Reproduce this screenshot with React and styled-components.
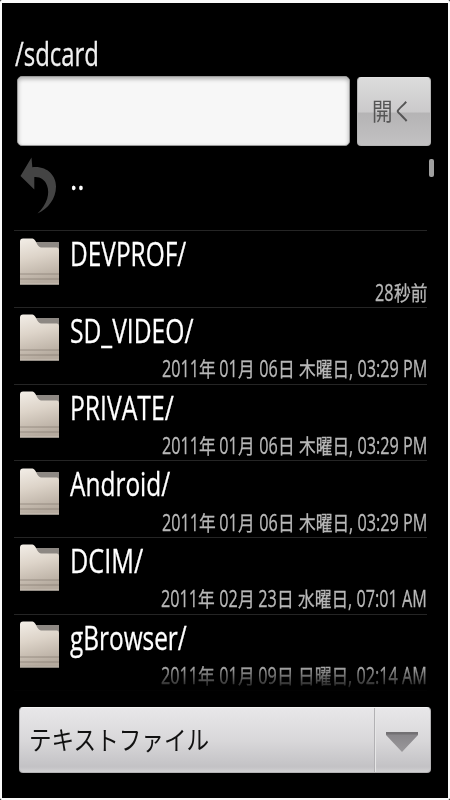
import React, { useLayoutEffect, useRef, useState } from "react"
import styled, { createGlobalStyle } from "styled-components"

const files = [
  {
    name: "DEVPROF/",
    width: 116,
    date: "28秒前",
  },
  {
    name: "SD_VIDEO/",
    width: 123.5,
    date: "2011年 01月 06日 木曜日, 03:29 PM",
  },
  {
    name: "PRIVATE/",
    width: 104,
    date: "2011年 01月 06日 木曜日, 03:29 PM",
  },
  {
    name: "Android/",
    width: 100,
    date: "2011年 01月 06日 木曜日, 03:29 PM",
  },
  {
    name: "DCIM/",
    width: 73,
    date: "2011年 02月 23日 水曜日, 07:01 AM",
  },
  {
    name: "gBrowser/",
    width: 116.5,
    date: "2011年 01月 09日 日曜日, 02:14 AM",
  },
]

// squeezes a run of text to a given width, or by a given factor
const Squeeze = ({ width, factor, children, ...rest }) => {
  const ref = useRef(null)
  const [natural, setNatural] = useState(0)

  useLayoutEffect(() => {
    setNatural(ref.current.offsetWidth)
  }, [children])

  const target = width || natural * factor
  const scale = natural ? target / natural : 1

  return (
    <Run style={{ width: target }} {...rest}>
      <RunText ref={ref} style={{ transform: `scaleX(${scale})` }}>
        {children}
      </RunText>
    </Run>
  )
}

const DateText = ({ children }) => (
  <DateLine>
    {children
      .split(/([\u3400-\u9fff]+)/)
      .filter(Boolean)
      .map((part, i) =>
        /[\u3400-\u9fff]/.test(part) ? (
          <KanjiRun key={i} factor={0.835}>
            {part}
          </KanjiRun>
        ) : (
          <Squeeze key={i} factor={0.675}>
            {part}
          </Squeeze>
        )
      )}
  </DateLine>
)

const BackIcon = () => (
  <svg width="40" height="60" viewBox="0 0 40 60">
    <path
      d="M.5 21 11.500 2.500l.8 9.700C26.500 10.500 36 20 36 31.500c0 12-8 22.500-18.500 27C27.500 49 30 38.500 27 30.500 25 24.500 20 21.500 14.300 22v12.500Z"
      fill="#444"
    />
  </svg>
)

const FolderIcon = () => (
  <svg width="40" height="47" viewBox="0 0 40 47">
    <defs>
      <linearGradient id="front" x1="0" y1="0" x2="0.2" y2="1">
        <stop offset="0" stopColor="#f3eee7" />
        <stop offset="0.45" stopColor="#ddd4c9" />
        <stop offset="1" stopColor="#b5aa9e" />
      </linearGradient>
    </defs>
    <path d="M15 4h24v12H20Z" fill="#8d8883" />
    <path
      d="M0 3.500Q0 .5 3 .5H12.500C16 .5 17 9.500 21 9.500H37Q39 9.500 39 12V46.500H0Z"
      fill="url(#front)"
    />
    <path
      d="M0 36h39M0 41h39"
      stroke="#7d7268"
      strokeOpacity="0.6"
      strokeWidth="1"
    />
    <path d="M0 46h39" stroke="#cdc5bb" strokeWidth="1" />
  </svg>
)

const App = () => {
  return (
    <>
      <GlobalStyle />
      <Screen>
        <Path>
          <Squeeze width={84}>/sdcard</Squeeze>
        </Path>

        <Toolbar>
          <PathInput aria-label="path" />
          <OpenButton>
            <Squeeze width={41}>開く</Squeeze>
          </OpenButton>
        </Toolbar>

        <ListArea>
          <List>
            <Row>
              <IconCell $top={0}>
                <BackIcon />
              </IconCell>
              <Name>
                <Squeeze width={15}>..</Squeeze>
              </Name>
            </Row>
            {files.map(({ name, width, date }) => (
              <Row key={name}>
                <IconCell $top={6.5}>
                  <FolderIcon />
                </IconCell>
                <Name>
                  <Squeeze width={width}>{name}</Squeeze>
                </Name>
                <DateText>{date}</DateText>
              </Row>
            ))}
          </List>
          <Thumb />
        </ListArea>

        <Spinner>
          <SpinnerLabel>
            <Squeeze width={180}>テキストファイル</Squeeze>
          </SpinnerLabel>
          <SpinnerArrow>
            <svg width="32" height="20" viewBox="0 0 32 20">
              <defs>
                <linearGradient id="arrow" x1="0" y1="0" x2="0" y2="1">
                  <stop offset="0" stopColor="#858387" />
                  <stop offset="1" stopColor="#9a989b" />
                </linearGradient>
              </defs>
              <path d="M0 0h32v3L16 20 0 3Z" fill="url(#arrow)" />
              <path d="M0 0h32v2.500H0Z" fill="#727073" />
            </svg>
          </SpinnerArrow>
        </Spinner>
      </Screen>
    </>
  )
}

const GlobalStyle = createGlobalStyle`
  * {
    box-sizing: border-box;
  }
  body {
    margin: 0;
    background: #000;
    font-family: "Open Sans", "Noto Sans CJK JP", sans-serif;
  }
`

const Run = styled.span`
  display: inline-block;
  white-space: pre;
`

const RunText = styled.span`
  display: inline-block;
  transform-origin: 0 50%;
`

const KanjiRun = styled(Squeeze)`
  font-family: "Noto Sans CJK JP", sans-serif;
  font-size: 20px;
`

const Screen = styled.main`
  display: flex;
  flex-direction: column;
  width: 450px;
  height: 800px;
  padding: 28px 16px 0 12px;
  overflow: hidden;
  background: #000;
  border: 2px solid #fafafa;
  border-top-width: 3px;
  border-radius: 2px;
`

const Path = styled.div`
  height: 45px;
  line-height: 45px;
  padding-left: 0.5px;
  font-size: 33px;
  font-weight: 500;
  -webkit-text-stroke: 0.3px;
  color: #f0f0f0;
`

const Toolbar = styled.div`
  display: flex;
  gap: 7px;
  height: 78.5px;
  padding-left: 3px;
`

const PathInput = styled.input`
  width: 333px;
  height: 70px;
  padding: 0 12px;
  background: #f7f7f7;
  border: 1px solid #999;
  border-radius: 5px;
  box-shadow: inset 0 2px 4px rgba(0, 0, 0, 0.3);
  outline: none;
`

const OpenButton = styled.button`
  width: 74px;
  height: 69px;
  margin-top: 1px;
  padding: 0 3px 5px 0;
  font-family: "Noto Sans CJK JP", sans-serif;
  font-size: 24px;
  color: #555;
  background: linear-gradient(#dcdcdc, #cbcacb 50%, #b5b4b5 53%, #c2c1c2);
  border: 1px solid #b4b4b4;
  border-top-color: #e2e2e2;
  border-radius: 4px;
`

const ListArea = styled.div`
  position: relative;
  height: 552.5px;
`

const List = styled.div`
  height: 537px;
  overflow: hidden;
  mask-image: linear-gradient(#000 510px, transparent 537px);
`

const Row = styled.div`
  display: grid;
  grid-template-columns: 56px 1fr;
  grid-template-rows: 45.5px 30.7px;
  width: 413px;
  height: 76.7px;
  border-bottom: 1px solid #252525;
`

const IconCell = styled.div`
  grid-row: 1 / 3;
  padding: ${props => props.$top}px 0 0 6px;
`

const Name = styled.div`
  line-height: 45px;
  font-size: 33.5px;
  font-weight: 500;
  -webkit-text-stroke: 0.3px;
  color: #fff;
`

const DateLine = styled.div`
  grid-column: 2;
  display: flex;
  justify-content: flex-end;
  align-items: baseline;
  line-height: 29.5px;
  font-size: 24px;
  -webkit-text-stroke: 0.3px;
  color: #b8b8b8;
`

const Thumb = styled.div`
  position: absolute;
  top: 4.5px;
  right: -2px;
  width: 5px;
  height: 18px;
  background: #a0a0a0;
  border-radius: 2px;
`

const Spinner = styled.div`
  display: flex;
  width: 412px;
  height: 66px;
  margin-left: 4.5px;
  background: linear-gradient(#e8e7e9, #d9d8da 50%, #c3c2c5 92%, #d2d1d3);
  border: 1px solid #b4b3b5;
  border-top-color: #f4f4f4;
  border-radius: 4px;
`

const SpinnerLabel = styled.div`
  flex: 1;
  padding-left: 9px;
  line-height: 62px;
  font-family: "Noto Sans CJK JP", sans-serif;
  font-size: 26px;
  color: #111;
`

const SpinnerArrow = styled.div`
  display: flex;
  align-items: center;
  justify-content: center;
  width: 56px;
  padding-top: 4px;
  border-left: 1px solid #b2b1b4;
  box-shadow: inset 1px 0 #e6e6e6;
`

export default App
